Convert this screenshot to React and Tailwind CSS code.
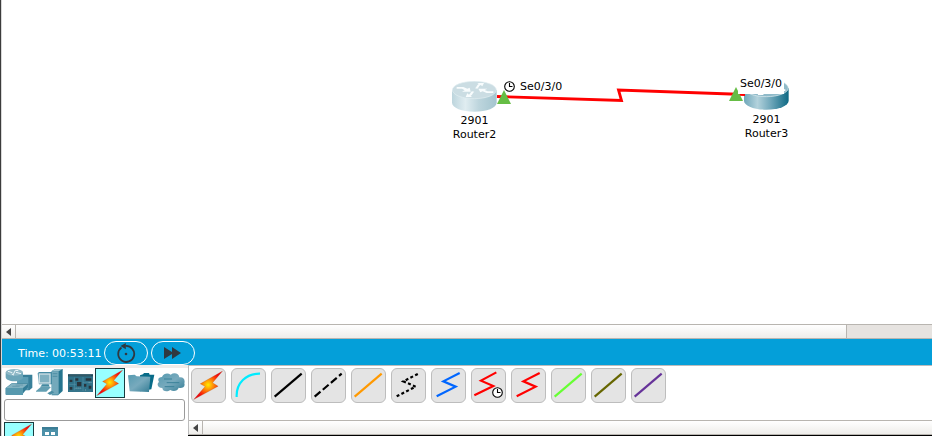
import React from "react";

function Bolt({ id, className }) {
  return (
    <svg viewBox="0 0 90 90" className={className}>
      <defs>
        <radialGradient id={id} gradientUnits="userSpaceOnUse" cx="44" cy="43" r="40">
          <stop offset="0" stopColor="#ffea00" />
          <stop offset="0.35" stopColor="#ff9408" />
          <stop offset="0.75" stopColor="#fb3008" />
          <stop offset="1" stopColor="#ee0610" />
        </radialGradient>
      </defs>
      <path d="M86 3 21 40 35 48 2 86 73 47 57 37Z" fill={`url(#${id})`} stroke="#8a4a20" strokeWidth="0.6" />
    </svg>
  );
}

function Router({ id, light, mid, dark, top, arrow }) {
  return (
    <svg viewBox="0 0 135 93" className="block w-[45px] h-[31px]">
      <defs>
        <linearGradient id={id}>
          <stop offset="0" stopColor={mid} />
          <stop offset="0.3" stopColor={light} />
          <stop offset="0.6" stopColor={mid} />
          <stop offset="1" stopColor={dark} />
        </linearGradient>
      </defs>
      <path d="M0 27v38c0 15 30 27 67 27s67-12 67-27V27Z" fill={`url(#${id})`} />
      <ellipse cx="67" cy="27" rx="66" ry="26" fill={top} stroke="#e3eef2" strokeWidth="2" />
      <g fill={arrow}>
        <path d="M14 18H34L46 23 53 20 56 32H30L38 28 30 23H14Z" />
        <path d="M124 36H104L92 31 85 34 79 23H106L98 27 107 31H124Z" />
        <path d="M69 22C75 18 74 12 80 9L76 6H96L91 16 86 12C80 15 81 20 76 23Z" />
        <path d="M67 32C61 36 62 41 56 44L60 48H41L46 37 51 41C56 38 55 34 60 31Z" />
      </g>
    </svg>
  );
}

function Clock({ className }) {
  return (
    <svg viewBox="0 0 11 11" className={className} fill="white" stroke="black">
      <circle cx="5.5" cy="5.5" r="4.8" strokeWidth="1.1" />
      <path d="M5.500 2V5.500H8.500" fill="none" strokeWidth="1.1" />
    </svg>
  );
}

const devices = [
  <g>
    <path d="M37 26 46 20H82V59L73 67H37Z" fill="#387f99" />
    <path d="M37 27H70V65H37Z" fill="#5b9db4" />
    <path d="M2 13v15c0 7 11 12 26 12s26-5 26-12V13Z" fill="#6ca5b8" />
    <ellipse cx="28" cy="13" rx="26" ry="10" fill="#8eb8c6" />
    <path d="M9 10 22 14M48 17 33 13M25 19 31 7M20 18 27 21M31 7 40 8" stroke="#edf7fa" strokeWidth="3" />
    <path d="M2 60 20 46H69V58L53 78H2Z" fill="#337c96" />
    <path d="M2 60H54V81H2Z" fill="#5799ae" />
    <path d="M3 60 20 47H69L54 60Z" fill="#83b2c1" />
    <path d="M22 55H44M32 51H54" stroke="#5a92a6" strokeWidth="2" />
  </g>,
  <g>
    <path d="M50 9 61 3H83V69L69 82H50Z" fill="#26758f" />
    <path d="M50 10H71V80H50Z" fill="#73a9bb" />
    <path d="M50 10 61 3H83L71 10Z" fill="#9bc3ce" />
    <path d="M53 17H67M53 25H67" stroke="#3c8299" strokeWidth="2" />
    <path d="M8 16 12 12H51V49H12Z" fill="#478ca4" />
    <path d="M11 16H47V47H11Z" fill="#cfe0e6" />
    <path d="M15 20H43V43H15Z" fill="#7fb0c0" />
    <path d="M22 49H41L44 56H16Z" fill="#438aa1" />
    <path d="M3 69 17 57H48L34 71H3Z" fill="#639fb2" />
    <path d="M37 76 50 68 58 73 45 81Z" fill="#4a8da3" />
  </g>,
  <g>
    <path d="M9 19H84V72H9Z" fill="#2f7188" />
    <path d="M9 19H84V25H9Z" fill="#244a59" />
    <path d="M14 35H22V42H14ZM31 31H40V38H31ZM36 42H49V55H36ZM62 31H79V38H62ZM57 48H64V56H57ZM14 57H22V65H14ZM71 53H79V62H71Z" fill="#29343c" />
    <path d="M28 28V67M54 27V69M12 49H34M53 43H81M28 62H50" stroke="#5c97ac" strokeWidth="1.500" />
    <path d="M14 23H79M14 69H77" stroke="#7399a6" strokeWidth="2" strokeDasharray="2 4" />
    <path d="M32 60H49M60 66H66M71 44H79" stroke="#a7bbc0" strokeWidth="2" strokeDasharray="3 3" />
  </g>,
  null,
  <g>
    <path d="M45 22 54 19 57 15H72L74 20H88L79 64 45 70Z" fill="#086b88" />
    <path d="M9 22 29 20 35 25 76 26 72 72 14 70Z" fill="url(#folder)" />
  </g>,
  <g>
    <path d="M21 27C27 15 39 15 47 20C58 12 72 17 73 28C86 26 91 36 88 46C92 57 80 62 71 59C68 70 54 71 46 66C35 74 22 69 22 60C8 60 4 48 12 42C6 32 13 27 21 27Z" fill="url(#folder)" />
    <path d="M27 33H51M35 44H73M29 56H58" stroke="#3b8299" strokeWidth="3" />
  </g>,
];

function DeviceIcon({ children }) {
  return (
    <svg viewBox="0 0 90 90" className="w-[30px] h-[30px] shrink-0">
      <defs>
        <linearGradient id="folder" x1="0" y1="0" x2="1" y2="1">
          <stop offset="0" stopColor="#559ab0" />
          <stop offset="0.5" stopColor="#78aabd" />
          <stop offset="1" stopColor="#347d95" />
        </linearGradient>
      </defs>
      {children}
    </svg>
  );
}

const straight = "M11 86 92 17";
const zigzag = "M17 85 74 56 37 40 86 15";
const cables = [
  { bolt: true },
  { d: "M17 87C15 46 45 16 87 17", color: "#00ecff" },
  { d: straight, color: "#000" },
  { d: straight, color: "#000", dash: "23 9" },
  { d: straight, color: "#ff9900" },
  { d: zigzag, color: "#000", dash: "9 7" },
  { d: zigzag, color: "#0066ff" },
  { d: "M10 82 67 54 30 38 76 13", color: "#ff0000", clock: true },
  { d: zigzag, color: "#ff0000" },
  { d: straight, color: "#66ff33" },
  { d: straight, color: "#666600" },
  { d: straight, color: "#663399" },
];

function Cable({ item }) {
  return (
    <button className="relative w-[35px] h-[35px] shrink-0 rounded-[6px] border border-[#bdbdbd] bg-[#e4e4e4] flex items-center justify-center">
      {item.bolt ? (
        <Bolt id="boltCable" className="w-[31px] h-[31px] shrink-0" />
      ) : (
        <svg viewBox="0 0 105 105" className="w-[35px] h-[35px] shrink-0" fill="none">
          <path d={item.d} stroke={item.color} strokeWidth="6.5" strokeDasharray={item.dash} />
        </svg>
      )}
      {item.clock && <Clock className="absolute left-[20px] top-[18px] w-[11px] h-[11px]" />}
    </button>
  );
}

function ScrollLeft() {
  return (
    <div className="w-[14px] h-full shrink-0 border-r border-[#b8b5b0] flex items-center justify-center pr-px">
      <svg viewBox="0 0 5 8" className="w-[5px] h-[8px]">
        <path d="M5 0V8L0 4Z" fill="#444" />
      </svg>
    </div>
  );
}

const label = "absolute text-center text-[11px] leading-[14px] whitespace-nowrap";

export default function App() {
  return (
    <div className="w-[932px] h-[436px] overflow-hidden flex bg-white text-black font-['DejaVu_Sans',sans-serif]">
      <div className="w-px shrink-0 bg-[#3c3c3c]" />
      <div className="flex-1 min-w-0 flex flex-col border-l border-[#d8d8d8]">
        <div className="relative h-[324px] shrink-0 bg-white">
          <div className="absolute left-[450px] top-[81px]">
            <Router id="router2" light="#e0edf1" mid="#bdd5dd" dark="#a4c5cf" top="#cbdde3" arrow="#f8fcfd" />
          </div>
          <div className="absolute left-[742px] top-[79px]">
            <Router id="router3" light="#b3d2dc" mid="#6fa7ba" dark="#0e6984" top="#8fbac9" arrow="#fff" />
          </div>
          <svg className="absolute left-[490px] top-[76px]" width="270" height="40" viewBox="0 0 270 40" fill="none">
            <path d="M5 20.5 129.500 24.500 126.500 14 253 18.5" stroke="#ff0000" strokeWidth="2.8" />
            <path d="M12 14 19 28H5Z" fill="#66bd45" />
            <path d="M244 11 251 25H237Z" fill="#66bd45" />
          </svg>
          <Clock className="absolute left-[502px] top-[81px] w-[11px] h-[11px]" />
          <div className={`${label} left-[518px] top-[80px]`}>Se0/3/0</div>
          <div className={`${label} left-[736px] top-[77px] w-[46px] h-[17px] bg-white`}>Se0/3/0</div>
          <div className={`${label} left-[440px] top-[114px] w-[65px]`}>2901<br />Router2</div>
          <div className={`${label} left-[732px] top-[113px] w-[65px]`}>2901<br />Router3</div>
        </div>

        <div className="h-[15px] shrink-0 flex border-y border-[#b8b5b0] bg-linear-to-b from-white to-[#eeedea]">
          <ScrollLeft />
          <div className="flex-1" />
          <div className="w-[86px] border-l border-[#b8b5b0] bg-[#e6e3e0]" />
        </div>

        <div className="h-[26px] shrink-0 bg-[#049fd9] flex items-center pl-4 text-white">
          <span className="w-[86px] text-[11px] leading-[14px] whitespace-nowrap pt-[3px]">Time: 00:53:11</span>
          <button className="w-[44px] h-[24px] mt-[2px] rounded-full border border-white flex items-center justify-center">
            <svg viewBox="0 0 20 20" className="w-5 h-5 shrink-0" fill="none">
              <path d="M5.500 4.500A8 8 0 1 0 9.500 3" stroke="#303840" strokeWidth="1.800" />
              <path d="M4.500 3 9.800 0V6.300Z" fill="#303840" />
              <circle cx="10" cy="11" r="1.300" fill="#303840" />
            </svg>
          </button>
          <button className="ml-[3px] w-[44px] h-[24px] mt-[2px] rounded-full border border-white flex items-center justify-center pr-px">
            <svg viewBox="0 0 17 12" className="w-[17px] h-3">
              <path d="M0 0 8 5V0L17 6 8 12V7L0 12Z" fill="#303840" />
            </svg>
          </button>
        </div>

        <div className="h-[71px] shrink-0 flex">
          <div className="w-[186px] shrink-0 border-t-3 border-[#efecea] pl-[2px] overflow-hidden">
            <div className="flex h-[30px] pl-px">
              {devices.map((d, i) =>
                d ? (
                  <DeviceIcon key={i}>{d}</DeviceIcon>
                ) : (
                  <div key={i} className="w-[30px] h-[30px] shrink-0 border border-[#183c40] bg-[#98ffff] flex">
                    <Bolt id="boltTab" className="w-[28px] h-[28px]" />
                  </div>
                )
              )}
            </div>
            <div className="mt-px w-[181px] h-[22px] rounded-[3px] border border-[#9b9b9b] bg-white" />
            <div className="mt-px flex">
              <div className="w-[30px] h-[30px] shrink-0 border border-[#183c40] bg-[#98ffff] flex">
                <Bolt id="boltSub" className="w-[28px] h-[28px]" />
              </div>
              <svg viewBox="0 0 48 48" className="ml-2 mt-[5px] w-4 h-4">
                <path d="M0 0H48V48H0Z" fill="#4d91a9" />
                <path d="M0 0H48V7H0Z" fill="#3b7d95" />
                <path d="M9 15H21V24H9ZM27 15H39V24H27Z" fill="#fff" />
              </svg>
            </div>
          </div>
          <div className="flex-1 min-w-0 border-t border-l border-[#bcbcbc] flex flex-col">
            <div className="h-[54px] shrink-0 flex gap-[5px] pl-[2px] pt-[2px]">
              {cables.map((c, i) => (
                <Cable key={i} item={c} />
              ))}
            </div>
            <div className="h-[15px] shrink-0 flex border-y border-[#b8b5b0] bg-linear-to-b from-white to-[#eeedea]">
              <ScrollLeft />
            </div>
            <div className="h-px -ml-px shrink-0 bg-black" />
          </div>
        </div>
      </div>
    </div>
  );
}
